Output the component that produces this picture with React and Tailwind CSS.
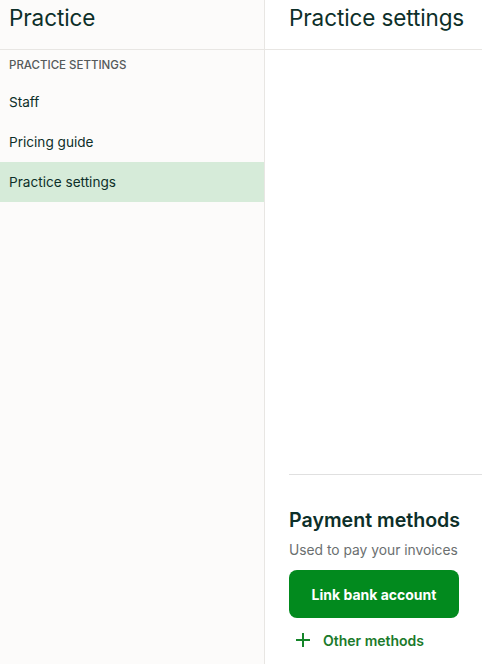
import React from 'react'

export default function App() {
  return (
    <div className="flex h-[664px] w-[482px] overflow-hidden bg-white font-['Inter',sans-serif] text-[#0d2f29]">
      <aside className="flex w-[265px] shrink-0 flex-col border-r border-[#e8e6e3] bg-[#fcfbfa]">
        <div className="h-[50px] border-b border-[#e8e6e3] px-[9px] pt-[2px]">
          <h1 className="text-[22.5px] leading-[32px] tracking-[-0.005em]">Practice</h1>
        </div>
        <div className="flex h-[32px] items-center px-[9px] text-[11.5px] font-medium text-[#555a5a]">
          PRACTICE SETTINGS
        </div>
        <nav className="flex flex-col text-[13.6px]">
          <a className="flex h-[40px] items-center px-[9px]">Staff</a>
          <a className="flex h-[40px] items-center px-[9px]">Pricing guide</a>
          <a className="flex h-[40px] items-center bg-[#d6ebd9] px-[9px]">Practice settings</a>
        </nav>
      </aside>
      <main className="flex min-w-0 flex-1 flex-col">
        <div className="h-[50px] shrink-0 border-b border-[#e8e6e3] pl-6 pt-[2px]">
          <h2 className="whitespace-nowrap text-[22.5px] leading-[32px] tracking-[-0.005em]">Practice settings</h2>
        </div>
        <div className="ml-6 mt-[424px] border-t border-[#e0e0e0]" />
        <section className="pl-6 pt-[29px]">
          <h3 className="whitespace-nowrap text-[19.6px] font-semibold leading-[32px]">Payment methods</h3>
          <p className="mt-[2px] whitespace-nowrap text-[13.8px] leading-[24px] text-[#6b6f70]">Used to pay your invoices</p>
          <button className="mt-[8px] h-[48px] w-[170px] rounded-[8px] bg-[#028a1e] text-[14px] font-bold text-white">
            Link bank account
          </button>
          <button className="mt-[10px] flex h-[24px] items-center gap-[13px] pl-[7px] text-[14px] font-semibold text-[#1b7a2a]">
            <svg width="14" height="14" viewBox="0 0 14 14" fill="none" stroke="#15852a" strokeWidth="2">
              <path d="M7 0v14M0 7h14" />
            </svg>
            Other methods
          </button>
        </section>
      </main>
    </div>
  )
}
